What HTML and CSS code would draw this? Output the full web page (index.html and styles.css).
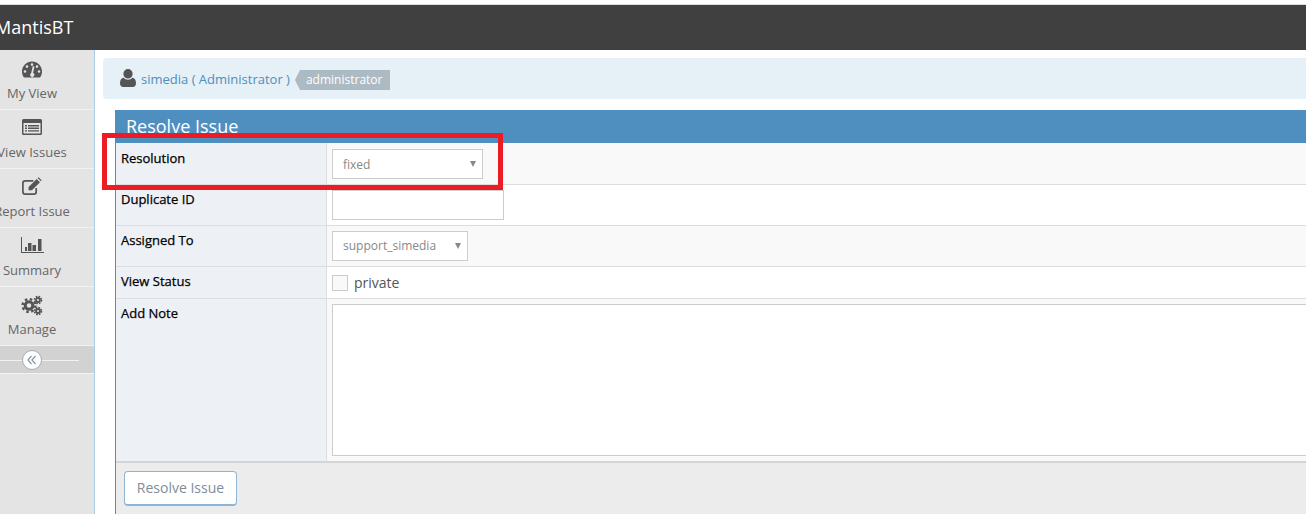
FILE: index.html
```html
<!DOCTYPE html>
<html lang="en">
<head>
<meta charset="utf-8">
<title>Resolve Issue</title>
<link rel="stylesheet" href="styles.css">
</head>
<body>
<div class="page">
  <header class="navbar"><span class="brand">MantisBT</span></header>
  <div class="layout">
    <nav class="sidebar">
      <a class="nav-item">
        <svg class="nav-icon" viewBox="0 0 22 20"><path fill="#555" fill-rule="evenodd" d="M11 1.500C5.300 1.500 1 6 1 11.500c0 2.300.7 4.300 2 6h16c1.300-1.700 2-3.700 2-6 0-5.500-4.300-10-10-10zM11 3.300a1.300 1.300 0 1 1 0 2.600 1.300 1.300 0 0 1 0-2.600zM6 5.300a1.300 1.300 0 1 1 0 2.600 1.300 1.300 0 0 1 0-2.600zM16 5.300a1.300 1.300 0 1 1 0 2.600 1.300 1.300 0 0 1 0-2.600zM4 10.200a1.300 1.300 0 1 1 0 2.600 1.300 1.300 0 0 1 0-2.600zM18 10.200a1.300 1.300 0 1 1 0 2.600 1.300 1.300 0 0 1 0-2.600zM13.500 6.500l-1.500 6.600a2 2 0 1 1-2.200 3.200 2 2 0 0 1 .4-3.300l1.500-6.800z"/></svg>
        <span>My View</span>
      </a>
      <a class="nav-item">
        <svg class="nav-icon" viewBox="0 0 22 20"><path fill="#555" fill-rule="evenodd" transform="translate(0 -2)" d="M2.500 2h17A1.500 1.500 0 0 1 21 3.500v13a1.500 1.500 0 0 1-1.500 1.500h-17A1.500 1.500 0 0 1 1 16.500v-13A1.500 1.500 0 0 1 2.500 2zM2.500 6v10.500h17V6zM4 8h2v1.400H4zM7 8h11v1.400H7zM4 10.600h2V12H4zM7 10.600h11V12H7zM4 13.200h2v1.400H4zM7 13.200h11v1.400H7z"/></svg>
        <span>View Issues</span>
      </a>
      <a class="nav-item">
        <svg class="nav-icon" viewBox="0 0 22 20"><g transform="translate(0 -1) scale(.95)"><path fill="none" stroke="#555" stroke-width="1.800" d="M16 11.500v4A2.500 2.500 0 0 1 13.500 18h-9A2.500 2.500 0 0 1 2 15.500v-9A2.500 2.500 0 0 1 4.500 4H13"/><path fill="#555" d="M8 10.500 16.500 2l3.500 3.500L11.500 14H8zM17.500 1l1-.7 3.200 3.200-.7 1z"/></g></svg>
        <span>Report Issue</span>
      </a>
      <a class="nav-item">
        <svg class="nav-icon wide" viewBox="0 0 22 20"><path fill="#555" d="M0 0h1v15h22v1H0zM4 10h2v4H4zM7 6h3.500v8H7zM11.500 8H15v6h-3.500zM17 2h3.500v12H17z"/></svg>
        <span>Summary</span>
      </a>
      <a class="nav-item">
        <svg class="nav-icon" viewBox="0 0 22 20"><g fill="none" stroke="#555"><circle cx="8" cy="9.500" r="3.800" stroke-width="3"/><circle cx="8" cy="9.500" r="6.400" stroke-width="2.400" stroke-dasharray="2.500 2.530"/><circle cx="17" cy="4" r="2" stroke-width="1.800"/><circle cx="17" cy="4" r="3.500" stroke-width="1.600" stroke-dasharray="1.700 1.050"/><circle cx="17" cy="15" r="2" stroke-width="1.800"/><circle cx="17" cy="15" r="3.500" stroke-width="1.600" stroke-dasharray="1.700 1.050"/></g></svg>
        <span>Manage</span>
      </a>
      <div class="collapse">
        <span class="collapse-btn"><svg class="collapse-icon" viewBox="0 0 10 10"><path fill="none" stroke="#8a9aa8" stroke-width="1.300" d="M4.500 1 1 5l3.500 4M8.500 1 5 5l3.500 4"/></svg></span>
      </div>
    </nav>
    <main class="main">
      <div class="breadcrumb">
        <svg class="user-icon" viewBox="0 0 16 18"><path fill="#555" d="M8 0a4.600 4.600 0 0 1 4.600 4.800A4.600 4.600 0 0 1 8 9.600a4.600 4.600 0 0 1-4.600-4.800A4.600 4.600 0 0 1 8 0zM3.500 8.800C4.600 10 6.200 10.700 8 10.700s3.400-.7 4.500-1.900c2.200.4 3.500 2.300 3.500 5.500 0 2.200-1.300 3.700-3.200 3.700H3.200C1.300 18 0 16.500 0 14.300 0 11.100 1.300 9.200 3.500 8.800z"/></svg>
        <span class="user-link">simedia ( Administrator )</span>
        <span class="role-tag">administrator</span>
      </div>
      <section class="widget">
        <h4 class="widget-title">Resolve Issue</h4>
        <table class="form-table">
          <colgroup><col class="col-label"><col></colgroup>
          <tr class="row-a row-1">
            <th>Resolution</th>
            <td><span class="select select-wide">fixed<i class="caret"></i></span></td>
          </tr>
          <tr class="row-b row-2">
            <th>Duplicate ID</th>
            <td><input class="text-input" type="text"></td>
          </tr>
          <tr class="row-a row-3">
            <th>Assigned To</th>
            <td><span class="select select-user">support_simedia<i class="caret"></i></span></td>
          </tr>
          <tr class="row-b row-4">
            <th>View Status</th>
            <td><label class="check"><i class="check-box"></i>private</label></td>
          </tr>
          <tr class="row-a row-5">
            <th>Add Note</th>
            <td><textarea class="note"></textarea></td>
          </tr>
        </table>
        <div class="widget-footer"><button class="btn" type="button">Resolve Issue</button></div>
      </section>
    </main>
  </div>
</div>
<div class="annotation"></div>
</body>
</html>
```

FILE: styles.css
```css
* { box-sizing: border-box; }
html, body { margin: 0; height: 100%; overflow: hidden; background: #fff; }
body { font-family: "Open Sans", sans-serif; font-size: 13px; color: #393939; position: relative; }

.page { margin-left: -30px; width: 1336px; padding-top: 4px; }

.navbar { height: 46px; background: #404040; border-top: 1px solid #ddd; padding-left: 25px; }
.brand { display: block; color: #fff; font-size: 18px; line-height: 45px; }

.layout { display: flex; height: 464px; }

.sidebar { width: 125px; flex: none; background: #e4e4e4; border-right: 1px solid #a9cfe8; }
.nav-item { display: flex; flex-direction: column; align-items: center; height: 59px; padding-top: 9px; border-bottom: 1px solid #f2f2f2; color: #666; font-size: 13px; line-height: 18px; }
.nav-item:first-child { height: 60px; padding-top: 10px; }
.nav-item span { margin-top: 4px; white-space: nowrap; }
.nav-icon { display: block; width: 22px; height: 20px; overflow: visible; }
.nav-icon.wide { margin-left: -1px; }

.collapse { position: relative; height: 28px; background: #d2d2d2; border-bottom: 1px solid #f2f2f2; display: flex; align-items: center; justify-content: center; }
.collapse::before { content: ""; position: absolute; left: 15px; right: 15px; top: 14px; height: 1px; background: #f2f2f2; }
.collapse-btn { position: relative; display: flex; align-items: center; justify-content: center; width: 20px; height: 20px; border-radius: 50%; background: #fff; border: 1px solid #aaa; }
.collapse-icon { width: 10px; height: 10px; }

.main { flex: 1; min-width: 0; padding: 8px 0 0 8px; }

.breadcrumb { display: flex; align-items: center; height: 41px; background: #e6f0f7; border-radius: 4px 0 0 4px; padding-left: 17px; }
.user-icon { width: 16px; height: 18px; margin-right: 5px; margin-top: -2px; }
.user-link { color: #4c8fbd; font-size: 13px; }
.role-tag { position: relative; margin: 2px 0 0 10px; height: 20px; padding: 0 8px 0 6px; background: #abbac3; color: #fff; font-size: 12px; line-height: 19px; }
.role-tag::before { content: ""; position: absolute; left: -5px; top: 0; border: 10px solid transparent; border-left-width: 0; border-right: 5px solid #abbac3; }

.widget { margin: 11px 0 0 12px; border-left: 1px solid #4f8fc0; }
.widget-title { margin: 0 0 0 -1px; height: 33px; background: #4f8fc0; color: #fff; font-size: 18px; font-weight: 400; line-height: 33px; padding-left: 11px; overflow: hidden; }

.form-table { width: 100%; border-collapse: separate; border-spacing: 0; table-layout: fixed; }
.col-label { width: 211px; }
.form-table th { text-align: left; vertical-align: top; font-size: 13px; font-weight: 400; -webkit-text-stroke: 0.25px #000; color: #000; background: #edf1f5; padding: 5px 0 0 5px; line-height: 18px; border-bottom: 1px solid #ddd; border-right: 1px solid #ddd; }
.form-table td { padding: 0 0 0 5px; vertical-align: top; border-bottom: 1px solid #ddd; }
.row-a td { background: #f9f9f9; }
.row-b td { background: #fff; }
.row-1 { height: 42px; }
.form-table .row-1 th { padding-top: 6px; }
.row-2 { height: 41px; }
.row-3 { height: 41px; }
.row-4 { height: 32px; }
.row-5 { height: 164px; }
.row-5 th, .row-5 td { border-bottom: 2px solid #d5d5d5; }

.select { position: relative; display: block; height: 30px; margin-top: 5px; padding-left: 10px; background: #fff; border: 1px solid #ccc; color: #888; font-size: 12px; line-height: 28px; }
.row-1 .select { margin-top: 6px; line-height: 29px; }
.select-wide { width: 151px; }
.select-user { width: 136px; }
.caret { position: absolute; right: 6px; top: 11px; border-style: solid; border-width: 6px 3px 0; border-color: #888 transparent transparent; }

.text-input { display: block; width: 172px; height: 30px; margin: 5px 0 0; border: 1px solid #ccc; background: #fff; padding: 0; }

.check { display: flex; align-items: center; margin-top: 7px; color: #555; font-size: 14px; line-height: 18px; }
.check-box { width: 16px; height: 16px; margin-right: 6px; border: 1px solid #ccc; background: #f9f9f9; }

.note { display: block; width: 1000px; height: 152px; margin: 5px 0 0; border: 1px solid #ccc; background: #fff; padding: 0; resize: none; }

.widget-footer { height: 52px; background: #ececec; padding: 8px 0 0 8px; }
.btn { display: block; width: 113px; height: 35px; padding: 0 0 2px; background: #fff; border: 1px solid #8fb5d6; border-bottom-width: 2px; border-radius: 4px; color: #7f8c99; font: 14px "Open Sans", sans-serif; }

.annotation { position: absolute; left: 102px; top: 133px; width: 401px; height: 57px; border: 5px solid #ed1c24; }
```
